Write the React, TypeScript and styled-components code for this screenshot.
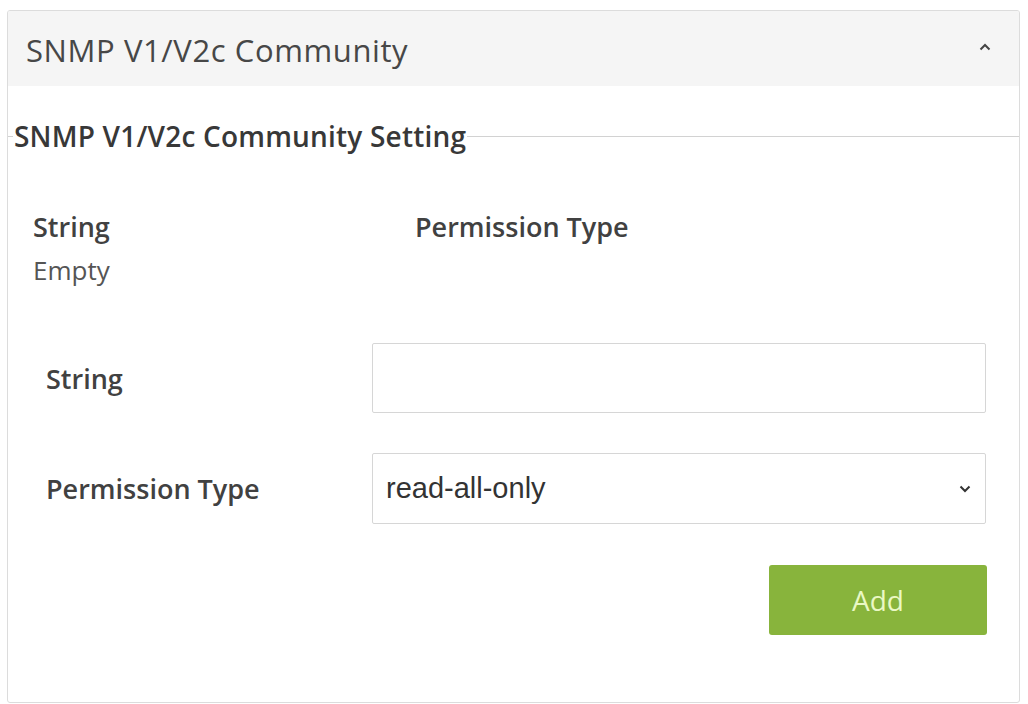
import React from "react";
import styled, { createGlobalStyle } from "styled-components";

const Global = createGlobalStyle`
  html, body { margin: 0; padding: 0; background: #ffffff; }
  body { font-family: "Open Sans", "Noto Sans", sans-serif; color: #444; }
  * { box-sizing: border-box; }
`;

const Page = styled.div`
  padding: 10px 8px 0 7px;
`;

const Panel = styled.section`
  border: 1px solid #dcdcdc;
  border-radius: 3px;
  height: 693px;
  background: #fff;
  overflow: hidden;
`;

const Header = styled.header`
  height: 75px;
  background: #f5f5f5;
  display: flex;
  align-items: center;
  justify-content: space-between;
  padding: 2px 28px 0 18px;
`;

const Title = styled.h2`
  margin: 0;
  font-size: 31px;
  line-height: 40px;
  font-weight: 400;
  color: #474747;
  letter-spacing: 0.6px;
`;

const Caret = styled.svg`
  width: 12px;
  height: 8px;
  margin-top: -5px;
`;

const Fieldset = styled.fieldset`
  margin: 33px 0 0 0;
  padding: 0;
  border: none;
  border-top: 1px solid #d2d2d2;
  min-width: 0;
`;

const Legend = styled.legend`
  margin-left: 5px;
  padding: 0 1px;
  font-size: 28px;
  line-height: 34px;
  font-weight: 600;
  color: #383838;
  letter-spacing: 0.2px;
`;

const ListHead = styled.div`
  display: grid;
  grid-template-columns: 382px 1fr;
  padding: 57px 0 0 25px;
`;

const ColHead = styled.div`
  font-size: 27px;
  font-weight: 600;
  color: #414141;
  line-height: 34px;
`;

const Cell = styled.div`
  margin-top: 9px;
  font-size: 26px;
  font-weight: 400;
  color: #555;
  line-height: 34px;
`;

const Form = styled.div`
  display: flex;
  flex-direction: column;
  gap: 40px;
  padding: 56px 33px 0 38px;
`;

const Row = styled.div`
  display: grid;
  grid-template-columns: 326px 1fr;
  align-items: center;
`;

const Label = styled.label`
  font-size: 27px;
  font-weight: 600;
  color: #414141;
`;

const Input = styled.input`
  height: 70px;
  width: 100%;
  border: 1px solid #d6d6d6;
  border-radius: 2px;
  font-family: "Liberation Sans", Arial, sans-serif;
  font-size: 29px;
  padding: 0 14px;
  outline: none;
`;

const Select = styled.div`
  height: 71px;
  width: 100%;
  border: 1px solid #d6d6d6;
  border-radius: 2px;
  font-family: "Liberation Sans", Arial, sans-serif;
  font-size: 29px;
  color: #333;
  padding: 0 14px 0 13px;
  display: flex;
  align-items: center;
  justify-content: space-between;
`;

const Actions = styled.div`
  display: flex;
  justify-content: flex-end;
  padding: 41px 32px 0 0;
`;

const AddButton = styled.button`
  width: 218px;
  height: 70px;
  border: none;
  border-radius: 3px;
  background: #88b43c;
  color: #eaf8c4;
  font-family: "Open Sans", sans-serif;
  font-size: 28px;
  font-weight: 400;
`;

export default function App() {
  return (
    <>
      <Global />
      <Page>
        <Panel>
          <Header>
            <Title>SNMP V1/V2c Community</Title>
            <Caret viewBox="0 0 12 8">
              <path d="M1.5 6.5 L6 2 L10.5 6.5" fill="none" stroke="#444" strokeWidth="2" />
            </Caret>
          </Header>
          <Fieldset>
            <Legend>SNMP V1/V2c Community Setting</Legend>
            <ListHead>
              <div>
                <ColHead>String</ColHead>
                <Cell>Empty</Cell>
              </div>
              <ColHead>Permission Type</ColHead>
            </ListHead>
            <Form>
              <Row>
                <Label>String</Label>
                <Input type="text" />
              </Row>
              <Row>
                <Label>Permission Type</Label>
                <Select>
                  <span>read-all-only</span>
                  <svg width="12" height="8" viewBox="0 0 12 8">
                    <path d="M1.5 1.5 L6 6 L10.5 1.5" fill="none" stroke="#333" strokeWidth="2" />
                  </svg>
                </Select>
              </Row>
            </Form>
            <Actions>
              <AddButton>Add</AddButton>
            </Actions>
          </Fieldset>
        </Panel>
      </Page>
    </>
  );
}
